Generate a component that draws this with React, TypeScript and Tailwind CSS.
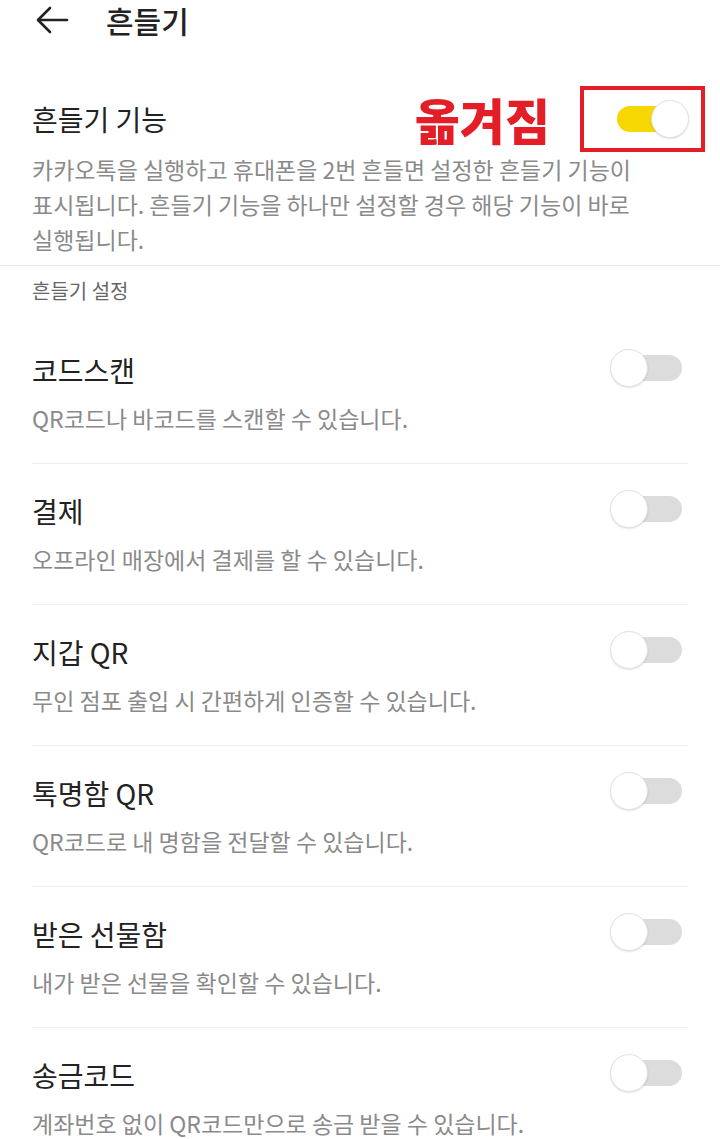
import { useState } from "react";

const items = [
  { title: "코드스캔", desc: "QR코드나 바코드를 스캔할 수 있습니다." },
  { title: "결제", desc: "오프라인 매장에서 결제를 할 수 있습니다." },
  { title: "지갑 QR", desc: "무인 점포 출입 시 간편하게 인증할 수 있습니다." },
  { title: "톡명함 QR", desc: "QR코드로 내 명함을 전달할 수 있습니다." },
  { title: "받은 선물함", desc: "내가 받은 선물을 확인할 수 있습니다." },
  { title: "송금코드", desc: "계좌번호 없이 QR코드만으로 송금 받을 수 있습니다." },
];

function Toggle({ on, onClick }: { on: boolean; onClick: () => void }) {
  return (
    <button onClick={onClick} className="relative w-[72px] h-[38px] shrink-0">
      <span
        className={`absolute top-[6px] h-[26px] rounded-full ${
          on ? "left-0 w-[62px] bg-[#f6d800]" : "right-0 w-[60px] bg-[#dcdcdc]"
        }`}
      />
      <span
        className={`absolute top-0 w-[38px] h-[38px] rounded-full bg-white border border-[#e2e2e2] shadow-[0_1px_2px_rgba(0,0,0,0.12)] ${
          on ? "right-0" : "left-0"
        }`}
      />
    </button>
  );
}

export default function App() {
  const [main, setMain] = useState(true);
  const [flags, setFlags] = useState(items.map(() => false));

  return (
    <div className="w-[720px] min-h-[1139px] bg-white text-[#222] break-keep font-['Noto_Sans_CJK_KR','Noto_Sans',sans-serif]">
      {/* header */}
      <div className="flex items-center h-[40px] pl-[36px]">
        <svg width="33" height="28" viewBox="0 0 33 28" fill="none" stroke="#222" strokeWidth="2.6" strokeLinecap="round" strokeLinejoin="round">
          <path d="M31 14H2.5" />
          <path d="M14 2L2 14l12 12" />
        </svg>
        <h1 className="ml-[37px] text-[30px] leading-[40px] font-medium">흔들기</h1>
      </div>

      {/* main switch */}
      <div className="mt-[46px] px-[32px]">
        <div className="flex items-center justify-between h-[66px]">
          <span className="text-[28px] leading-[36px]">흔들기 기능</span>
          <div className="flex items-center -mr-[17px]">
            <span className="text-[#e41e26] text-[49px] leading-[50px] font-black mr-[30px]">옮겨짐</span>
            <div className="w-[125px] h-[66px] border-[4px] border-[#e41e26] flex items-center pl-[33px]">
              <Toggle on={main} onClick={() => setMain(!main)} />
            </div>
          </div>
        </div>
        <p className="text-[23px] leading-[35px] text-[#8a8a8a] pr-[40px]">
          카카오톡을 실행하고 휴대폰을 2번 흔들면 설정한 흔들기 기능이 표시됩니다. 흔들기 기능을 하나만 설정할 경우 해당 기능이 바로 실행됩니다.
        </p>
      </div>

      <div className="mt-[8px] border-t border-[#e6e6e6]" />

      <div className="px-[32px]">
        <p className="mt-[12px] text-[20px] leading-[26px] text-[#666]">흔들기 설정</p>
        <div className="mt-[19px]">
          {items.map((item, i) => (
            <div
              key={item.title}
              className={`pt-[28px] pb-[30px] ${i < items.length - 1 ? "border-b border-[#ededed]" : ""}`}
            >
              <div className="flex items-center justify-between h-[38px]">
                <span className="text-[28px] leading-[38px]">{item.title}</span>
                <div className="mr-[6px]">
                  <Toggle
                    on={flags[i]}
                    onClick={() => setFlags(flags.map((f, j) => (j === i ? !f : f)))}
                  />
                </div>
              </div>
              <p className="mt-[14px] text-[23px] leading-[30px] text-[#8a8a8a]">{item.desc}</p>
            </div>
          ))}
        </div>
      </div>
    </div>
  );
}
